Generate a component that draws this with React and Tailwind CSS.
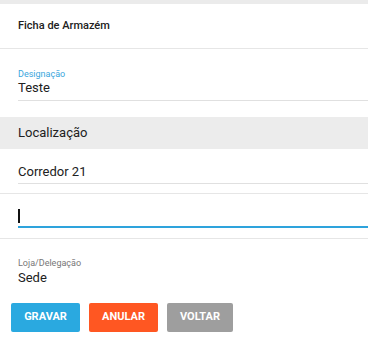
export default function App() {
    return (
        <div className="w-[368px] h-[343px] bg-white overflow-hidden font-['Roboto',sans-serif] text-[#212121]">
            <div className="h-[4px] bg-[#ebebeb]"></div>

            {/* Header */}
            <div className="h-[45px] flex items-center px-[18px] border-b border-[#e6e6e6]">
                <span className="text-[11px] font-medium leading-[14px]">Ficha de Armazém</span>
            </div>

            {/* Designação */}
            <div className="pl-[18px] pt-[19px]">
                <div className="text-[9px] leading-[12px] text-[#3aa6dd]">Designação</div>
                <div className="text-[13px] leading-[16px] pb-[4px] border-b border-[#e0e0e0]">Teste</div>
            </div>

            {/* Localização */}
            <div className="mt-[16px] h-[32px] bg-[#ececec] flex items-center px-[18px]">
                <span className="text-[13px] leading-[16px]">Localização</span>
            </div>

            <div className="pl-[18px] pt-[15px] pb-[9px] border-b border-[#e6e6e6]">
                <div className="text-[13px] leading-[16px] pb-[3px] border-b border-[#e0e0e0]">Corredor 21</div>
            </div>

            <div className="pl-[18px] pt-[15px] pb-[10px] border-b border-[#e6e6e6]">
                <div className="h-[19px] border-b-2 border-[#2ea3dc]">
                    <div className="w-[2px] h-[14px] bg-[#111]"></div>
                </div>
            </div>

            {/* Loja/Delegação */}
            <div className="pl-[18px] pt-[18px]">
                <div className="text-[9px] leading-[12px] text-[#777]">Loja/Delegação</div>
                <div className="text-[13px] leading-[16px] mt-[1px]">Sede</div>
            </div>

            {/* Buttons */}
            <div className="flex gap-[9px] pl-[11px] mt-[17px]">
                <button className="w-[69px] h-[29px] rounded-[2px] bg-[#2aa9e0] text-white text-[11px] font-bold">GRAVAR</button>
                <button className="w-[69px] h-[29px] rounded-[2px] bg-[#ff5722] text-white text-[11px] font-bold">ANULAR</button>
                <button className="w-[66px] h-[29px] rounded-[2px] bg-[#9e9e9e] text-white text-[11px] font-bold">VOLTAR</button>
            </div>
        </div>
    );
}
